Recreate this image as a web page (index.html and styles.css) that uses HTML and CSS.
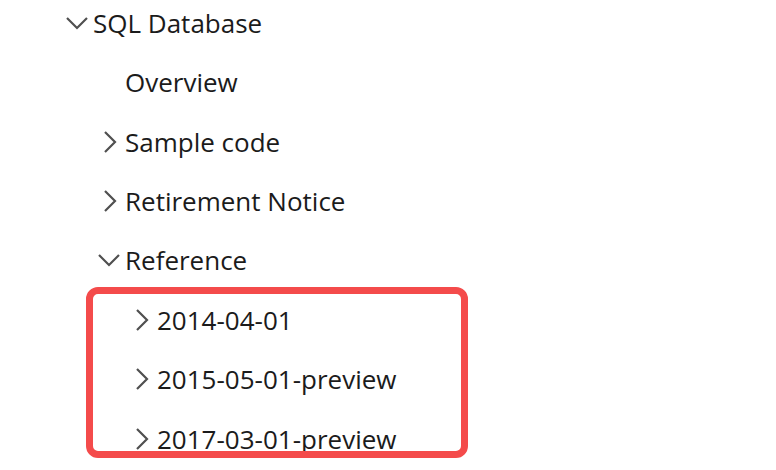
FILE: index.html
```html
<!DOCTYPE html>
<html>
<head>
<meta charset="utf-8">
<link rel="stylesheet" href="styles.css">
</head>
<body>
<div class="page">
  <ul class="tree">
    <li class="row l0"><span class="chev"><svg width="24" height="24" viewBox="0 0 24 24"><path d="M2 7 L12 17 L22 7" /></svg></span><span class="label">SQL Database</span></li>
    <li class="row l1"><span class="chev"></span><span class="label">Overview</span></li>
    <li class="row l1"><span class="chev"><svg width="24" height="24" viewBox="0 0 24 24"><path d="M8 2 L18 12 L8 22" /></svg></span><span class="label">Sample code</span></li>
    <li class="row l1"><span class="chev"><svg width="24" height="24" viewBox="0 0 24 24"><path d="M8 2 L18 12 L8 22" /></svg></span><span class="label">Retirement Notice</span></li>
    <li class="row l1"><span class="chev"><svg width="24" height="24" viewBox="0 0 24 24"><path d="M2 7 L12 17 L22 7" /></svg></span><span class="label">Reference</span></li>
    <li class="row l2"><span class="chev"><svg width="24" height="24" viewBox="0 0 24 24"><path d="M8 2 L18 12 L8 22" /></svg></span><span class="label">2014-04-01</span></li>
    <li class="row l2"><span class="chev"><svg width="24" height="24" viewBox="0 0 24 24"><path d="M8 2 L18 12 L8 22" /></svg></span><span class="label">2015-05-01-preview</span></li>
    <li class="row l2"><span class="chev"><svg width="24" height="24" viewBox="0 0 24 24"><path d="M8 2 L18 12 L8 22" /></svg></span><span class="label">2017-03-01-preview</span></li>
  </ul>
  <div class="highlight"></div>
</div>
</body>
</html>
```
FILE: styles.css
```css
html, body {
  margin: 0;
  padding: 0;
  background: #ffffff;
}
.page {
  position: relative;
  width: 776px;
  height: 470px;
  overflow: hidden;
  font-family: "Open Sans", "Noto Sans", sans-serif;
  color: #1b1b1b;
}
.tree {
  list-style: none;
  margin: 0;
  padding: 0;
}
.row {
  display: flex;
  align-items: center;
  height: 59.43px;
  font-size: 26px;
  line-height: 30px;
  margin-top: -7px;
  margin-bottom: 7px;
}
.l0 { padding-left: 65px; }
.l1 { padding-left: 97px; }
.l2 { padding-left: 129px; }
.chev {
  width: 28px;
  height: 24px;
  flex: none;
  display: flex;
  align-items: center;
  justify-content: flex-start;
}
.chev svg {
  display: block;
}
.chev path {
  fill: none;
  stroke: #505050;
  stroke-width: 2.2;
}
.label {
  white-space: nowrap;
}
.highlight {
  position: absolute;
  left: 86px;
  top: 287px;
  width: 382px;
  height: 171px;
  box-sizing: border-box;
  border: 7px solid #f44b4b;
  border-radius: 12px;
}
```
